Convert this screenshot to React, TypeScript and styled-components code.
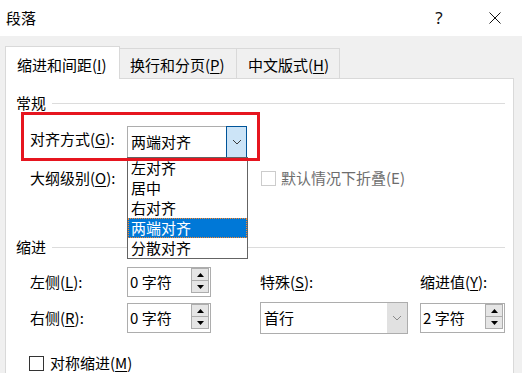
import React from "react";
import styled, { createGlobalStyle } from "styled-components";

const Global = createGlobalStyle`
  html, body { margin: 0; padding: 0; }
  body {
    background: #f0f0f0;
    font-family: "Noto Sans CJK SC", "Noto Sans", sans-serif;
    font-size: 15px;
    color: #000;
  }
  u { text-decoration-thickness: 1px; text-underline-offset: 2px; }
`;

const Window = styled.div`
  width: 522px;
  height: 373px;
  overflow: hidden;
  background: #f0f0f0;
  display: flex;
  flex-direction: column;
`;

const TitleBar = styled.div`
  height: 36px;
  flex: none;
  background: #fff;
  display: flex;
  align-items: center;
  padding: 0 12px 0 6px;
`;

const Title = styled.div`
  font-size: 15px;
  line-height: 20px;
  margin-top: -1px;
`;

const CaptionButton = styled.div`
  width: 30px;
  height: 30px;
  display: flex;
  align-items: center;
  justify-content: center;
  font-family: "Noto Sans", sans-serif;
  font-size: 17px;
  color: #111;
`;

const Help = styled(CaptionButton)`
  margin-left: auto;
  margin-right: 26px;
  margin-top: -2px;
`;

const Body = styled.div`
  flex: 1;
  padding: 10px 8px 0 5px;
  display: flex;
  flex-direction: column;
`;

const Tabs = styled.div`
  display: flex;
  align-items: flex-end;
  height: 32px;
  flex: none;
  position: relative;
  z-index: 2;
`;

const Tab = styled.div<{ $active?: boolean; $w: number; $pl: number }>`
  box-sizing: border-box;
  width: ${(p) => p.$w}px;
  height: ${(p) => (p.$active ? 33 : 30)}px;
  margin-bottom: ${(p) => (p.$active ? -1 : 0)}px;
  margin-left: -1px;
  &:first-child { margin-left: 0; }
  padding-left: ${(p) => p.$pl}px;
  padding-top: ${(p) => (p.$active ? 8 : 6)}px;
  line-height: 20px;
  background: ${(p) => (p.$active ? "#fff" : "#f0f0f0")};
  border: 1px solid #d9d9d9;
  border-bottom: none;
  position: relative;
  z-index: ${(p) => (p.$active ? 2 : 1)};
  white-space: nowrap;
`;

const Panel = styled.div`
  box-sizing: border-box;
  width: 509px;
  height: 300px;
  flex: none;
  background: #fff;
  border: 1px solid #d9d9d9;
  padding: 0 8px 0 0;
  display: flex;
  flex-direction: column;
`;

const GroupHeader = styled.div<{ $mt: number }>`
  display: flex;
  align-items: center;
  height: 20px;
  line-height: 20px;
  margin: ${(p) => p.$mt}px 0 0 10px;
  &::after {
    content: "";
    flex: 1;
    height: 1px;
    background: #dcdcdc;
    margin-left: 6px;
  }
`;

const Highlight = styled.div`
  box-sizing: border-box;
  position: relative;
  width: 239px;
  height: 49px;
  margin: -1px 0 0 15px;
  padding: 11px 0 0 9px;
  display: flex;
  align-items: flex-start;
  &::after {
    content: "";
    position: absolute;
    inset: 0;
    border: 3px solid #e6151f;
    z-index: 10;
    pointer-events: none;
  }
`;

const FieldLabel = styled.div<{ $w?: number }>`
  width: ${(p) => (p.$w ? `${p.$w}px` : "auto")};
  flex: none;
  line-height: 20px;
  white-space: nowrap;
`;

const ComboLabel = styled(FieldLabel)`
  line-height: 32px;
  height: 32px;
`;

const Combo = styled.div<{ $w: number }>`
  box-sizing: border-box;
  position: relative;
  width: ${(p) => p.$w}px;
  height: 32px;
  border: 1px solid #adadad;
  background: #fff;
  display: flex;
  align-self: center;
`;

const ComboText = styled.div`
  flex: 1;
  padding-left: 3px;
  line-height: 30px;
  white-space: nowrap;
`;

const ComboButton = styled.div<{ $open?: boolean }>`
  box-sizing: border-box;
  width: ${(p) => (p.$open ? 21 : 20)}px;
  flex: none;
  display: flex;
  align-items: center;
  justify-content: center;
  background: ${(p) => (p.$open ? "#cce4f7" : "#e1e1e1")};
  border: 1px solid ${(p) => (p.$open ? "#005499" : "#e1e1e1")};
  margin: ${(p) => (p.$open ? "-1px -1px -1px 0" : "0")};
  color: ${(p) => (p.$open ? "#3c3c3c" : "#8a8a8a")};
`;

const DropList = styled.div`
  box-sizing: border-box;
  position: absolute;
  top: 30px;
  left: -1px;
  width: 121px;
  height: 102px;
  border: 1px solid #646464;
  background: #fff;
  z-index: 5;
  overflow: hidden;
`;

const DropItem = styled.div<{ $sel?: boolean }>`
  box-sizing: border-box;
  height: 20px;
  line-height: 18px;
  padding-left: 2px;
  white-space: nowrap;
  background: ${(p) => (p.$sel ? "#0078d7" : "transparent")};
  color: ${(p) => (p.$sel ? "#fff" : "#000")};
  border: 1px ${(p) => (p.$sel ? "dotted #ff8728" : "solid transparent")};
`;

const OutlineRow = styled.div`
  display: flex;
  align-items: center;
  height: 32px;
  margin: 1px 0 0 24px;
`;

const CheckRow = styled.div<{ $disabled?: boolean }>`
  display: flex;
  align-items: center;
  gap: 5px;
  color: ${(p) => (p.$disabled ? "#6d6d6d" : "#000")};
  line-height: 20px;
  white-space: nowrap;
`;

const CheckBox = styled.span<{ $disabled?: boolean }>`
  box-sizing: border-box;
  width: 15px;
  height: 15px;
  flex: none;
  background: #fff;
  border: 1px solid ${(p) => (p.$disabled ? "#cccccc" : "#333333")};
`;

const IndentGrid = styled.div`
  display: grid;
  grid-template-columns: 97px 84px 49px 148px 12px 85px;
  grid-template-rows: 30px 32px;
  row-gap: 5px;
  align-items: center;
  margin: 10px 0 0 24px;
`;

const Spin = styled.div<{ $w: number }>`
  box-sizing: border-box;
  width: ${(p) => p.$w}px;
  height: 30px;
  border: 1px solid #adadad;
  background: #fff;
  display: flex;
  align-items: flex-start;
  padding: 0 1px 0 0;
`;

const SpinText = styled.div`
  flex: 1;
  padding-left: 2px;
  line-height: 28px;
  white-space: nowrap;
`;

const SpinButtons = styled.div`
  width: 18px;
  display: flex;
  flex-direction: column;
`;

const SpinButton = styled.div<{ $down?: boolean }>`
  box-sizing: border-box;
  height: 13px;
  background: #e5e5e5;
  border: 1px solid #adadad;
  margin-top: ${(p) => (p.$down ? -1 : 0)}px;
  display: flex;
  align-items: center;
  justify-content: center;
`;

const BottomCheck = styled(CheckRow)`
  margin: 19px 0 0 23px;
  gap: 6px;
`;

const Chevron = ({ w = 8 }: { w?: number }) => (
  <svg width={w + 2} height={6} viewBox={`0 0 ${w + 2} 6`}>
    <polyline points={`1,1 ${(w + 2) / 2},5 ${w + 1},1`} fill="none" stroke="currentColor" strokeWidth="1" />
  </svg>
);

const Tri = ({ down }: { down?: boolean }) => (
  <svg width="7" height="4" viewBox="0 0 7 4">
    <polygon points={down ? "0,0 7,0 3.5,4" : "0,4 7,4 3.5,0"} fill="#000" />
  </svg>
);

const SpinBox = ({ w, value }: { w: number; value: string }) => (
  <Spin $w={w}>
    <SpinText>{value}</SpinText>
    <SpinButtons>
      <SpinButton><Tri /></SpinButton>
      <SpinButton $down><Tri down /></SpinButton>
    </SpinButtons>
  </Spin>
);

const items = ["左对齐", "居中", "右对齐", "两端对齐", "分散对齐"];

export default function App() {
  return (
    <Window>
      <Global />
      <TitleBar>
        <Title>段落</Title>
        <Help>?</Help>
        <CaptionButton>
          <svg width="12" height="12" viewBox="0 0 12 12">
            <path d="M0.5 0.5 L11.5 11.5 M11.5 0.5 L0.5 11.5" stroke="#111" strokeWidth="1" fill="none" />
          </svg>
        </CaptionButton>
      </TitleBar>
      <Body>
        <Tabs>
          <Tab $active $w={115} $pl={11}>缩进和间距(<u>I</u>)</Tab>
          <Tab $w={118} $pl={10}>换行和分页(<u>P</u>)</Tab>
          <Tab $w={104} $pl={11}>中文版式(<u>H</u>)</Tab>
        </Tabs>
        <Panel>
          <GroupHeader $mt={14}>常规</GroupHeader>
          <Highlight>
            <ComboLabel $w={97}>对齐方式(<u>G</u>):</ComboLabel>
            <Combo $w={120}>
              <ComboText>两端对齐</ComboText>
              <ComboButton $open><Chevron w={8} /></ComboButton>
              <DropList>
                {items.map((t) => (
                  <DropItem key={t} $sel={t === "两端对齐"}>{t}</DropItem>
                ))}
              </DropList>
            </Combo>
          </Highlight>
          <OutlineRow>
            <FieldLabel $w={231}>大纲级别(<u>O</u>):</FieldLabel>
            <CheckRow $disabled>
              <CheckBox $disabled />
              <span>默认情况下折叠(E)</span>
            </CheckRow>
          </OutlineRow>
          <GroupHeader $mt={43}>缩进</GroupHeader>
          <IndentGrid>
            <FieldLabel>左侧(<u>L</u>):</FieldLabel>
            <SpinBox w={84} value="0 字符" />
            <span />
            <FieldLabel>特殊(<u>S</u>):</FieldLabel>
            <span />
            <FieldLabel>缩进值(<u>Y</u>):</FieldLabel>
            <FieldLabel>右侧(<u>R</u>):</FieldLabel>
            <SpinBox w={84} value="0 字符" />
            <span />
            <Combo $w={148}>
              <ComboText>首行</ComboText>
              <ComboButton><Chevron w={8} /></ComboButton>
            </Combo>
            <span />
            <SpinBox w={85} value="2 字符" />
          </IndentGrid>
          <BottomCheck>
            <CheckBox />
            <span>对称缩进(<u>M</u>)</span>
          </BottomCheck>
        </Panel>
      </Body>
    </Window>
  );
}
